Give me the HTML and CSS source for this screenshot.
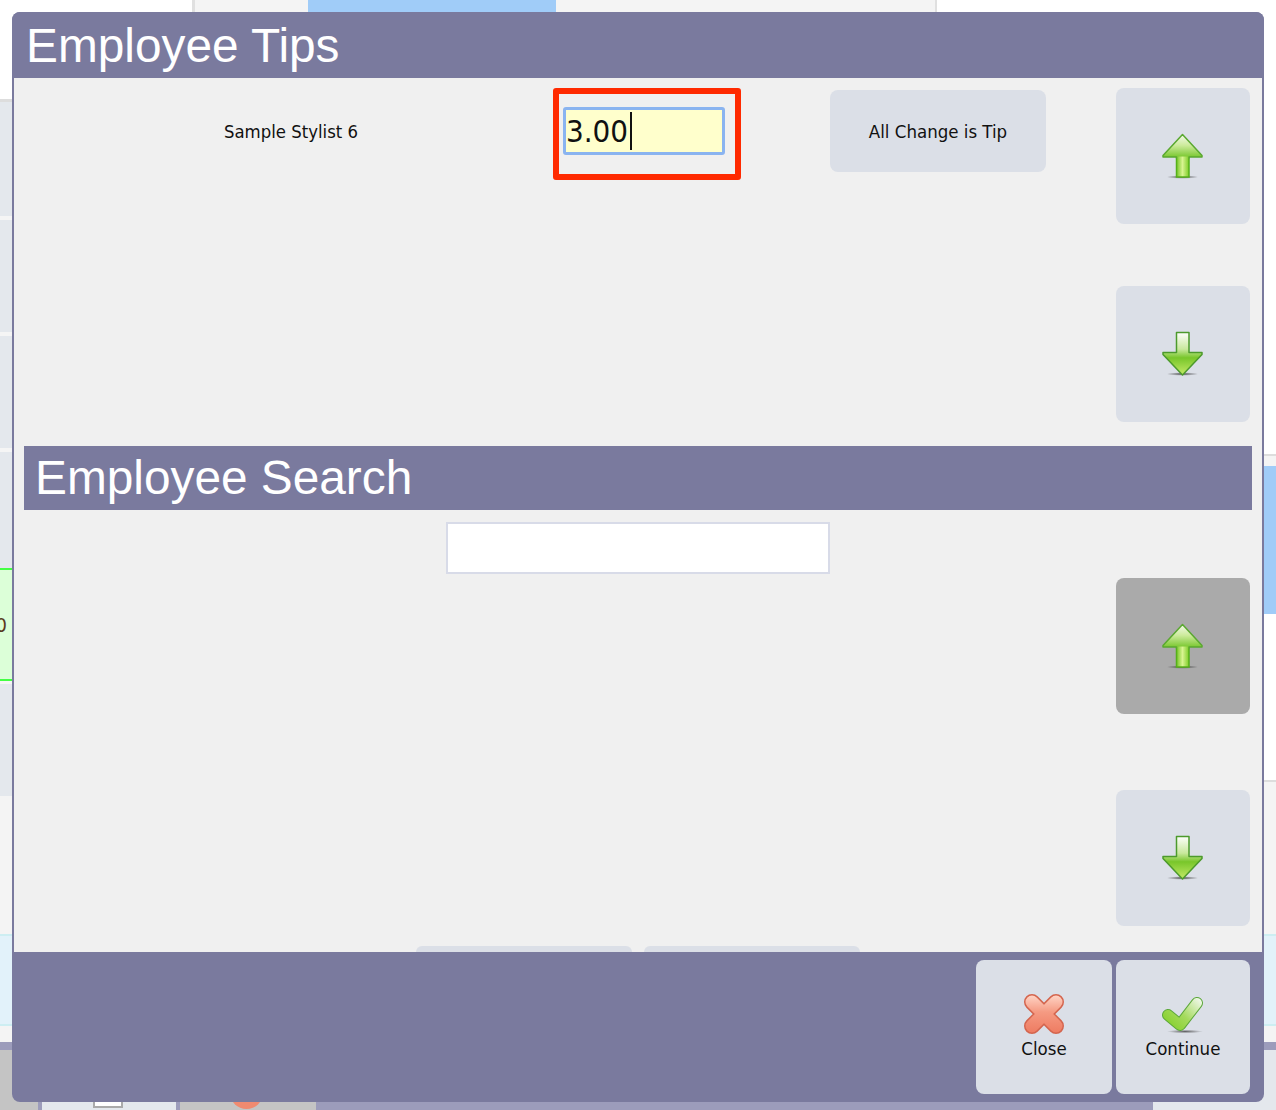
FILE: index.html
```html
<!DOCTYPE html>
<html lang="en">
<head>
    <meta charset="UTF-8">
    <meta name="viewport" content="width=device-width, initial-scale=1.0">
    <title>Employee Tips</title>
    <link rel="stylesheet" href="styles.css">
</head>
<body>
    <!-- the page behind the dialog -->
    <div class="backdrop">
        <div class="top-strip">
            <div class="tab-white"></div>
            <div class="tab-soft"></div>
            <div class="tab-blue"></div>
            <div class="tab-soft-wide"></div>
            <div class="tab-rest"></div>
        </div>
        <div class="middle">
            <div class="side">
                <div class="blank h87"></div>
                <div class="line h3"></div>
                <div class="row h114"></div>
                <div class="sep h4"></div>
                <div class="row h112"></div>
                <div class="sep h4"></div>
                <div class="row h112"></div>
                <div class="sep h4"></div>
                <div class="row h116"></div>
                <div class="row-green"><span class="clipped">0</span></div>
                <div class="sep h3"></div>
                <div class="row h112"></div>
                <div class="soft h138"></div>
                <div class="cyan"></div>
                <div class="soft h16"></div>
            </div>
            <div class="side">
                <div class="blank h442"></div>
                <div class="line h2"></div>
                <div class="soft h10"></div>
                <div class="blue"></div>
                <div class="blank h166"></div>
                <div class="line h2"></div>
                <div class="soft h152"></div>
                <div class="cyan"></div>
                <div class="soft h16"></div>
            </div>
        </div>
        <div class="divider"></div>
        <div class="bottom-bar">
            <div class="cell-gray w38"></div>
            <div class="cell-purple w4"></div>
            <div class="cell-light w134"><div class="mini-box"></div></div>
            <div class="cell-purple w4"></div>
            <div class="cell-gray w136"><div class="mini-blob"></div></div>
            <div class="cell-purple w837"></div>
            <div class="cell-light grow"></div>
        </div>
    </div>

    <div class="dialog">
        <div class="dialog-title">Employee Tips</div>
        <div class="dialog-body">
            <div class="tips">
                <div class="tip-row">
                    <div class="tip-name">Sample Stylist 6</div>
                    <div class="highlight">
                        <div class="tip-input">3.00<span class="caret"></span></div>
                    </div>
                    <button class="btn btn-change">All Change is Tip</button>
                </div>
                <div class="scroller">
                    <button class="btn btn-square">
                        <svg class="icon" viewBox="0 0 48 48"><use href="#arrow-up"/></svg>
                    </button>
                    <button class="btn btn-square">
                        <svg class="icon" viewBox="0 0 48 48"><use href="#arrow-down"/></svg>
                    </button>
                </div>
            </div>

            <div class="section-title">Employee Search</div>

            <div class="search">
                <div class="search-main">
                    <div class="search-input"></div>
                    <div class="peek-row">
                        <div class="peek"></div>
                        <div class="peek"></div>
                    </div>
                </div>
                <div class="scroller scroller-search">
                    <button class="btn btn-square btn-disabled">
                        <svg class="icon" viewBox="0 0 48 48"><use href="#arrow-up"/></svg>
                    </button>
                    <button class="btn btn-square">
                        <svg class="icon" viewBox="0 0 48 48"><use href="#arrow-down"/></svg>
                    </button>
                </div>
            </div>
        </div>
        <div class="dialog-footer">
            <button class="btn btn-action btn-close">
                <svg class="icon" viewBox="0 0 48 48">
                    <defs>
                        <linearGradient id="x-fill" gradientUnits="userSpaceOnUse" x1="0" y1="4" x2="0" y2="44">
                            <stop offset="0" stop-color="#ffd8ca"/>
                            <stop offset="0.45" stop-color="#f59a82"/>
                            <stop offset="1" stop-color="#ee7a60"/>
                        </linearGradient>
                    </defs>
                    <path d="M12 12L36 36M36 12L12 36" fill="none" stroke="#d4654e" stroke-width="16" stroke-linecap="round"/>
                    <path d="M12 12L36 36M36 12L12 36" fill="none" stroke="url(#x-fill)" stroke-width="13" stroke-linecap="round"/>
                </svg>
                <span>Close</span>
            </button>
            <button class="btn btn-action">
                <svg class="icon" viewBox="0 0 48 48">
                    <defs>
                        <linearGradient id="check-fill" gradientUnits="userSpaceOnUse" x1="10" y1="38" x2="40" y2="8">
                            <stop offset="0" stop-color="#86d02c"/>
                            <stop offset="0.45" stop-color="#a4da5c"/>
                            <stop offset="1" stop-color="#f0f8ea"/>
                        </linearGradient>
                        <radialGradient id="shadow" cx="0.5" cy="0.5" r="0.5">
                            <stop offset="0" stop-color="#444" stop-opacity="0.8"/>
                            <stop offset="1" stop-color="#444" stop-opacity="0"/>
                        </radialGradient>
                    </defs>
                    <ellipse cx="26" cy="41.5" rx="18" ry="1.8" fill="url(#shadow)"/>
                    <path d="M9 25L21 35L38 13" fill="none" stroke="#5ca83a" stroke-width="12" stroke-linecap="round" stroke-linejoin="round"/>
                    <path d="M9 25L21 35L38 13" fill="none" stroke="url(#check-fill)" stroke-width="10" stroke-linecap="round" stroke-linejoin="round"/>
                </svg>
                <span>Continue</span>
            </button>
        </div>
    </div>

    <!-- arrow icons, shared by the scroll buttons -->
    <svg class="sprites" width="0" height="0">
        <defs>
            <linearGradient id="up-head" gradientUnits="userSpaceOnUse" x1="0" y1="2" x2="0" y2="27">
                <stop offset="0" stop-color="#f4faee"/>
                <stop offset="0.45" stop-color="#cdeb9c"/>
                <stop offset="1" stop-color="#6cc21e"/>
            </linearGradient>
            <linearGradient id="up-stem" gradientUnits="userSpaceOnUse" x1="17" y1="0" x2="30" y2="0">
                <stop offset="0" stop-color="#6cc21e"/>
                <stop offset="0.5" stop-color="#d8f490"/>
                <stop offset="1" stop-color="#7ccc26"/>
            </linearGradient>
            <linearGradient id="down-fill" gradientUnits="userSpaceOnUse" x1="0" y1="2" x2="0" y2="45">
                <stop offset="0" stop-color="#ffffff"/>
                <stop offset="0.4" stop-color="#c8e89c"/>
                <stop offset="0.6" stop-color="#78c62a"/>
                <stop offset="1" stop-color="#c4ea66"/>
            </linearGradient>
            <radialGradient id="arrow-shadow" cx="0.5" cy="0.5" r="0.5">
                <stop offset="0" stop-color="#333" stop-opacity="0.85"/>
                <stop offset="1" stop-color="#333" stop-opacity="0"/>
            </radialGradient>
            <g id="arrow-up">
                <ellipse cx="23.5" cy="45" rx="16" ry="1.8" fill="url(#arrow-shadow)"/>
                <path d="M17.5 24H30V45H17.5Z" fill="url(#up-stem)" stroke="#56b01a" stroke-width="1.5"/>
                <path d="M23.5 2.5L43 23.5V25H30V26H17.5V25H4V23.5Z" fill="url(#up-head)" stroke="#5aa830" stroke-width="1.5" stroke-linejoin="round"/>
                <path d="M18.3 24.5H29.2V27H18.3Z" fill="url(#up-stem)"/>
            </g>
            <g id="arrow-down">
                <ellipse cx="23.5" cy="44" rx="16" ry="1.8" fill="url(#arrow-shadow)"/>
                <path d="M17.5 2.5H30V22.5H43V24.5L23.5 45L4 24.5V22.5H17.5Z" fill="url(#down-fill)" stroke="#4c9a2c" stroke-width="1.5" stroke-linejoin="round"/>
            </g>
        </defs>
    </svg>
</body>
</html>
```

FILE: styles.css
```css
html, body {
    margin: 0;
    height: 1110px;
    overflow: hidden;
    background: white;
}
body {
    font-family: "DejaVu Sans Condensed", "DejaVu Sans", sans-serif;
    color: #111;
}

/* page behind the dialog */
.backdrop {
    display: flex;
    flex-direction: column;
    height: 1110px;
}
.top-strip {
    display: flex;
    height: 12px;
}
.tab-white { width: 192px; border-right: 3px solid #e0e0e0; background: white; }
.tab-soft { width: 113px; background: #f4f4f4; }
.tab-blue { width: 248px; background: #a0ccf8; }
.tab-soft-wide { width: 379px; background: #f4f4f4; border-right: 2px solid #e0e0e0; }
.tab-rest { flex: 1; background: white; }

.middle {
    display: flex;
    justify-content: space-between;
    height: 1030px;
}
.side {
    width: 16px;
    display: flex;
    flex-direction: column;
}
.blank { background: white; }
.line { background: #dddddd; }
.row { background: #e4e8ed; }
.sep { background: #f5f5f5; }
.soft { background: #f4f4f4; }
.blue { height: 148px; background: #a0ccf8; }
.cyan {
    height: 88px;
    background: #e2f2fa;
    border-top: 2px solid #cdeef2;
    border-bottom: 2px solid #cdeef2;
}
.row-green {
    height: 109px;
    background: #dcffd8;
    border-top: 2px solid #44ff44;
    border-bottom: 2px solid #44ff44;
    display: flex;
    align-items: center;
    overflow: hidden;
}
.side:first-child .row-green { justify-content: flex-end; padding-right: 9px; }
.clipped { font-size: 20px; color: #5a3a20; }

.h2 { height: 2px; }
.h3 { height: 3px; }
.h4 { height: 4px; }
.h10 { height: 10px; }
.h16 { height: 16px; }
.h87 { height: 87px; }
.h112 { height: 112px; }
.h114 { height: 114px; }
.h116 { height: 116px; }
.h138 { height: 138px; }
.h152 { height: 152px; }
.h166 { height: 166px; }
.h442 { height: 442px; }

.divider { height: 8px; background: #9c9cbb; }
.bottom-bar {
    display: flex;
    height: 60px;
}
.cell-gray { background: #c4c4c4; display: flex; align-items: flex-end; justify-content: center; overflow: hidden; }
.cell-purple { background: #9c9cbb; }
.cell-light { background: #e4e8ed; display: flex; align-items: flex-end; overflow: hidden; }
.w4 { width: 4px; }
.w38 { width: 38px; }
.w134 { width: 134px; }
.w136 { width: 136px; }
.w837 { width: 837px; }
.grow { flex: 1; }
.mini-box {
    width: 26px;
    height: 12px;
    margin: 0 0 2px 51px;
    background: white;
    border: 2px solid #aaaaaa;
}
.mini-blob {
    width: 33px;
    height: 33px;
    margin: 0 3px 1px 0;
    border-radius: 50%;
    background: #f08a70;
}

/* dialog */
.dialog {
    position: absolute;
    left: 12px;
    top: 12px;
    width: 1252px;
    height: 1090px;
    display: flex;
    flex-direction: column;
    box-sizing: border-box;
    background: #7a7a9e;
    border-radius: 8px;
    overflow: hidden;
}
.dialog-title, .section-title {
    font-family: "Liberation Sans", Arial, sans-serif;
    font-size: 47.8px;
    color: white;
    background: #7a7a9e;
}
.dialog-title {
    height: 66px;
    line-height: 68px;
    padding-left: 14px;
}
.dialog-body {
    flex: 1;
    margin: 0 2px;
    background: #f0f0f0;
    display: flex;
    flex-direction: column;
}
.section-title {
    height: 64px;
    line-height: 64px;
    margin: 0 10px;
    padding-left: 11px;
}
.dialog-footer {
    height: 150px;
    display: flex;
    justify-content: flex-end;
    gap: 4px;
    padding: 8px 14px 8px 0;
    box-sizing: border-box;
}

/* tips part */
.tips {
    height: 368px;
    display: flex;
    justify-content: space-between;
    padding: 10px 12px 24px 10px;
    box-sizing: border-box;
}
.tip-row {
    display: flex;
    align-items: flex-start;
}
.tip-name {
    width: 529px;
    height: 82px;
    margin-top: 2px;
    box-sizing: border-box;
    padding-left: 5px;
    display: flex;
    align-items: center;
    justify-content: center;
    font-size: 18.4px;
}
.highlight {
    width: 188px;
    height: 92px;
    box-sizing: border-box;
    border: 6px solid #ff2a00;
    border-radius: 3px;
    padding: 13px 10px 0 4px;
}
.tip-input {
    height: 48px;
    box-sizing: border-box;
    border: 3px solid #8ab4f0;
    border-radius: 3px;
    background: #ffffcc;
    font-size: 31px;
    line-height: 42px;
    display: flex;
    align-items: center;
}
.caret {
    width: 2px;
    height: 38px;
    margin-left: 2px;
    background: #111;
}

.btn {
    font-family: inherit;
    color: #111;
    background: #dbdfe7;
    border: none;
    border-radius: 8px;
    padding: 0;
    font-size: 18.5px;
}
.btn-change {
    width: 216px;
    height: 82px;
    margin: 2px 0 0 89px;
}
.btn-square {
    width: 134px;
    height: 136px;
    display: flex;
    align-items: center;
    justify-content: center;
}
.btn-disabled { background: #aaaaaa; }
.btn-action {
    width: 136px;
    height: 134px;
    display: flex;
    flex-direction: column;
    align-items: center;
    padding-top: 30px;
    line-height: 22px;
}
.btn-action:last-child { width: 134px; }
.scroller {
    display: flex;
    flex-direction: column;
    justify-content: space-between;
}
.icon {
    width: 48px;
    height: 48px;
    display: block;
}
.sprites { position: absolute; }

/* search part */
.search {
    flex: 1;
    display: flex;
    justify-content: space-between;
    padding: 0 12px 0 10px;
    overflow: hidden;
}
.search-main {
    width: 1092px;
    display: flex;
    flex-direction: column;
    justify-content: space-between;
}
.search-input {
    width: 384px;
    height: 52px;
    margin: 12px 0 0 422px;
    box-sizing: border-box;
    background: white;
    border: 2px solid #d8dbe8;
}
.peek-row {
    display: flex;
    gap: 12px;
    height: 6px;
    margin-left: 392px;
}
.peek {
    width: 216px;
    height: 6px;
    background: #dbdfe7;
    border-radius: 6px 6px 0 0;
}
.scroller-search {
    padding: 68px 0 26px;
}
```
